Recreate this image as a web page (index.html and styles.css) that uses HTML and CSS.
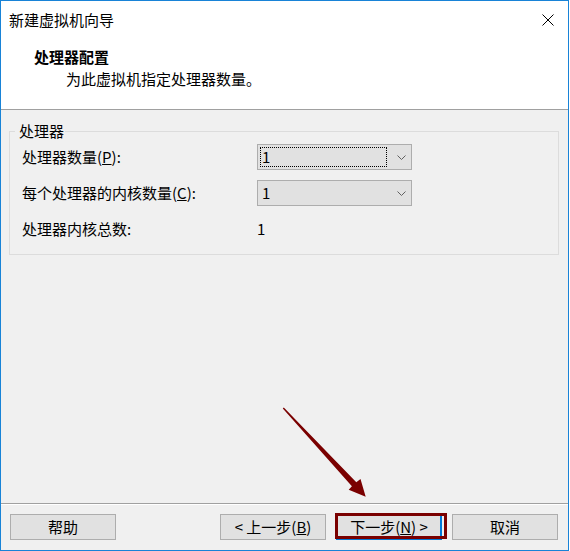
FILE: index.html
```html
<!DOCTYPE html>
<html lang="zh-CN">
<head>
<meta charset="utf-8">
<title>新建虚拟机向导</title>
<link rel="stylesheet" href="styles.css">
</head>
<body>
<div class="window">
  <div class="titlebar">
    <span class="title">新建虚拟机向导</span>
    <span class="close"><svg width="12" height="12" viewBox="0 0 12 12"><path d="M0.5 0.5L11.5 11.5M11.5 0.5L0.5 11.5" stroke="#000" stroke-width="1" fill="none"/></svg></span>
  </div>
  <div class="header">
    <div class="h-title">处理器配置</div>
    <div class="h-sub">为此虚拟机指定处理器数量。</div>
  </div>
  <div class="body">
    <fieldset class="group">
      <legend>处理器</legend>
      <div class="grid">
        <span class="lbl">处理器数量(<u>P</u>):</span>
        <div class="combo"><span class="val focus">1</span><span class="carrow"><svg width="9" height="5" viewBox="0 0 9 5"><polyline points="0.5,0.5 4.5,4.5 8.5,0.5" stroke="#606060" stroke-width="1" fill="none"/></svg></span></div>
        <span class="lbl">每个处理器的内核数量(<u>C</u>):</span>
        <div class="combo"><span class="val">1</span><span class="carrow"><svg width="9" height="5" viewBox="0 0 9 5"><polyline points="0.5,0.5 4.5,4.5 8.5,0.5" stroke="#606060" stroke-width="1" fill="none"/></svg></span></div>
        <span class="lbl">处理器内核总数:</span>
        <span class="total">1</span>
      </div>
    </fieldset>
  </div>
  <div class="footer">
    <button class="btn">帮助</button>
    <span class="spacer"></span>
    <button class="btn">&lt; 上一步(<u>B</u>)</button>
    <button class="btn next">下一步(<u>N</u>) &gt;</button>
    <button class="btn">取消</button>
  </div>
  <svg class="annot" width="90" height="95" viewBox="0 0 90 95"><polygon points="2.8,3.6 3.8,2.6 76.3,77.3 80.5,74 85.7,91.7 68.7,84.8 71.9,81.3" fill="#7a0000"/></svg>
</div>
</body>
</html>
```
FILE: styles.css
```css
body {
  margin: 0;
  font-family: "Noto Sans CJK SC", "Noto Sans", sans-serif;
  font-size: 15px;
  color: #000;
}
.window {
  position: relative;
  box-sizing: border-box;
  width: 569px;
  height: 551px;
  border: 1px solid #1883d7;
  background: #f0f0f0;
  display: flex;
  flex-direction: column;
}
.titlebar {
  height: 37px;
  background: #fff;
  display: flex;
  align-items: center;
  justify-content: space-between;
  padding-left: 8px;
}
.title { line-height: 20px; }
.close {
  width: 40px;
  height: 37px;
  display: flex;
  align-items: center;
  justify-content: center;
}
.header {
  background: #fff;
  padding: 9px 0 20px 33px;
  border-bottom: 1px solid #a0a0a0;
}
.h-title { font-weight: 700; line-height: 20px; }
.h-sub { line-height: 20px; margin-top: 2px; margin-left: 32px; }
.body {
  flex: 1;
  padding-top: 11px;
}
.group {
  margin: 0 9px 0 8px;
  padding: 3px 12px 12px 12px;
  border: 1px solid #dcdcdc;
  min-width: 0;
}
.group legend {
  padding: 0 1px 0 4px;
  margin-left: -7px;
  line-height: 20px;
}
.grid {
  display: grid;
  grid-template-columns: 235px 155px;
  grid-auto-rows: 26px;
  row-gap: 10px;
  align-items: center;
}
.lbl, .total { line-height: 20px; }
.combo {
  box-sizing: border-box;
  height: 26px;
  border: 1px solid #adadad;
  background: #e1e1e1;
  display: flex;
  align-items: center;
  padding-left: 2px;
}
.val {
  box-sizing: border-box;
  width: 127px;
  height: 20px;
  line-height: 18px;
  padding-left: 1px;
  border: 1px solid transparent;
}
.val.focus { border: 1px dotted #000; }
.carrow {
  flex: 1;
  display: flex;
  justify-content: center;
  padding-left: 4px;
}
.carrow svg { display: block; }
.footer {
  border-top: 1px solid #a0a0a0;
  box-shadow: inset 0 1px 0 #fff;
  padding: 10px 10px 10px 9px;
  display: flex;
  gap: 10px;
}
.spacer { flex: 1; }
.btn {
  box-sizing: border-box;
  width: 106px;
  height: 26px;
  padding: 0;
  margin: 0;
  border: 1px solid #adadad;
  border-radius: 0;
  background: #e1e1e1;
  font-family: inherit;
  font-size: 15px;
  color: #000;
  line-height: 20px;
}
.btn.next {
  position: relative;
  border-color: #0078d7;
  box-shadow: inset 0 0 0 1px #0078d7;
}
.btn.next::after {
  content: "";
  position: absolute;
  left: -2px;
  top: -2px;
  width: 112px;
  height: 26px;
  box-sizing: border-box;
  border: 3px solid #7a0000;
}
.annot {
  position: absolute;
  left: 279px;
  top: 404px;
}
```
